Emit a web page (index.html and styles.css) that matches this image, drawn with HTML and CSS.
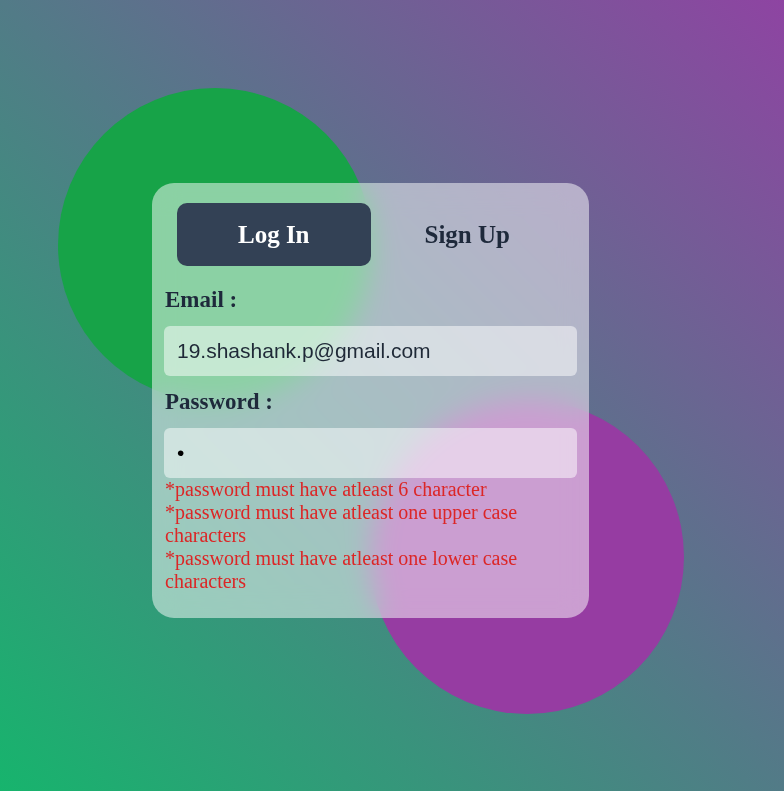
FILE: index.html
```html
<!DOCTYPE html>
<html lang="en">
<head>
<meta charset="utf-8">
<title>Log In</title>
<link rel="stylesheet" href="styles.css">
</head>
<body>
<div class="scene">
  <div class="blob blob-green"></div>
  <div class="blob blob-purple"></div>
  <form class="card">
    <div class="tabs">
      <button type="button" class="tab tab-active">Log In</button>
      <button type="button" class="tab">Sign Up</button>
    </div>
    <label class="label" for="email">Email :</label>
    <input class="field" id="email" type="text" value="19.shashank.p@gmail.com">
    <label class="label" for="pw">Password :</label>
    <input class="field" id="pw" type="password" value="a">
    <div class="errors">
      <p>*password must have atleast 6 character</p>
      <p>*password must have atleast one upper case characters</p>
      <p>*password must have atleast one lower case characters</p>
    </div>
  </form>
</div>
</body>
</html>
```
FILE: styles.css
```css
html, body {
  margin: 0;
  padding: 0;
  height: 100%;
}
body {
  font-family: "Liberation Serif", "Times New Roman", serif;
  overflow: hidden;
}
.scene {
  position: relative;
  width: 784px;
  height: 791px;
  background: linear-gradient(to top right, #17b46d 0%, #527b87 50%, #8e44a2 100%);
  overflow: hidden;
}
.blob {
  position: absolute;
  width: 314px;
  height: 314px;
  border-radius: 50%;
}
.blob-green {
  left: 58px;
  top: 88px;
  background: #17a348;
}
.blob-purple {
  left: 370px;
  top: 400px;
  background: #963ca2;
}
.card {
  position: absolute;
  left: 152px;
  top: 183px;
  width: 437px;
  box-sizing: border-box;
  padding: 20px 12px 25px;
  border-radius: 22px;
  background: rgba(255, 255, 255, 0.5);
  backdrop-filter: blur(14px);
  -webkit-backdrop-filter: blur(14px);
  display: flex;
  flex-direction: column;
}
.tabs {
  display: grid;
  grid-template-columns: 1fr 1fr;
  margin: 0 13px 21px;
}
.tab {
  height: 63px;
  border: 0;
  border-radius: 10px;
  background: transparent;
  font-family: "Liberation Serif", "Times New Roman", serif;
  font-weight: bold;
  font-size: 25px;
  color: #1e293b;
  padding: 0;
  cursor: pointer;
}
.tab-active {
  background: #334155;
  color: #ffffff;
}
.label {
  display: block;
  font-weight: bold;
  font-size: 23px;
  line-height: 26px;
  color: #1e293b;
  padding-left: 1px;
  margin-bottom: 13px;
}
.field {
  display: block;
  width: 100%;
  box-sizing: border-box;
  height: 50px;
  border: 0;
  border-radius: 6px;
  background: rgba(255, 255, 255, 0.5);
  padding: 0 13px;
  font-family: "Liberation Sans", Arial, sans-serif;
  font-size: 21px;
  color: #1f2937;
  outline: none;
  margin-bottom: 13px;
}
#pw {
  margin-bottom: 0;
  color: #000;
}
.errors {
  color: #dc2626;
  font-size: 20px;
  line-height: 23px;
  padding-left: 1px;
}
.errors p {
  margin: 0;
}
```
